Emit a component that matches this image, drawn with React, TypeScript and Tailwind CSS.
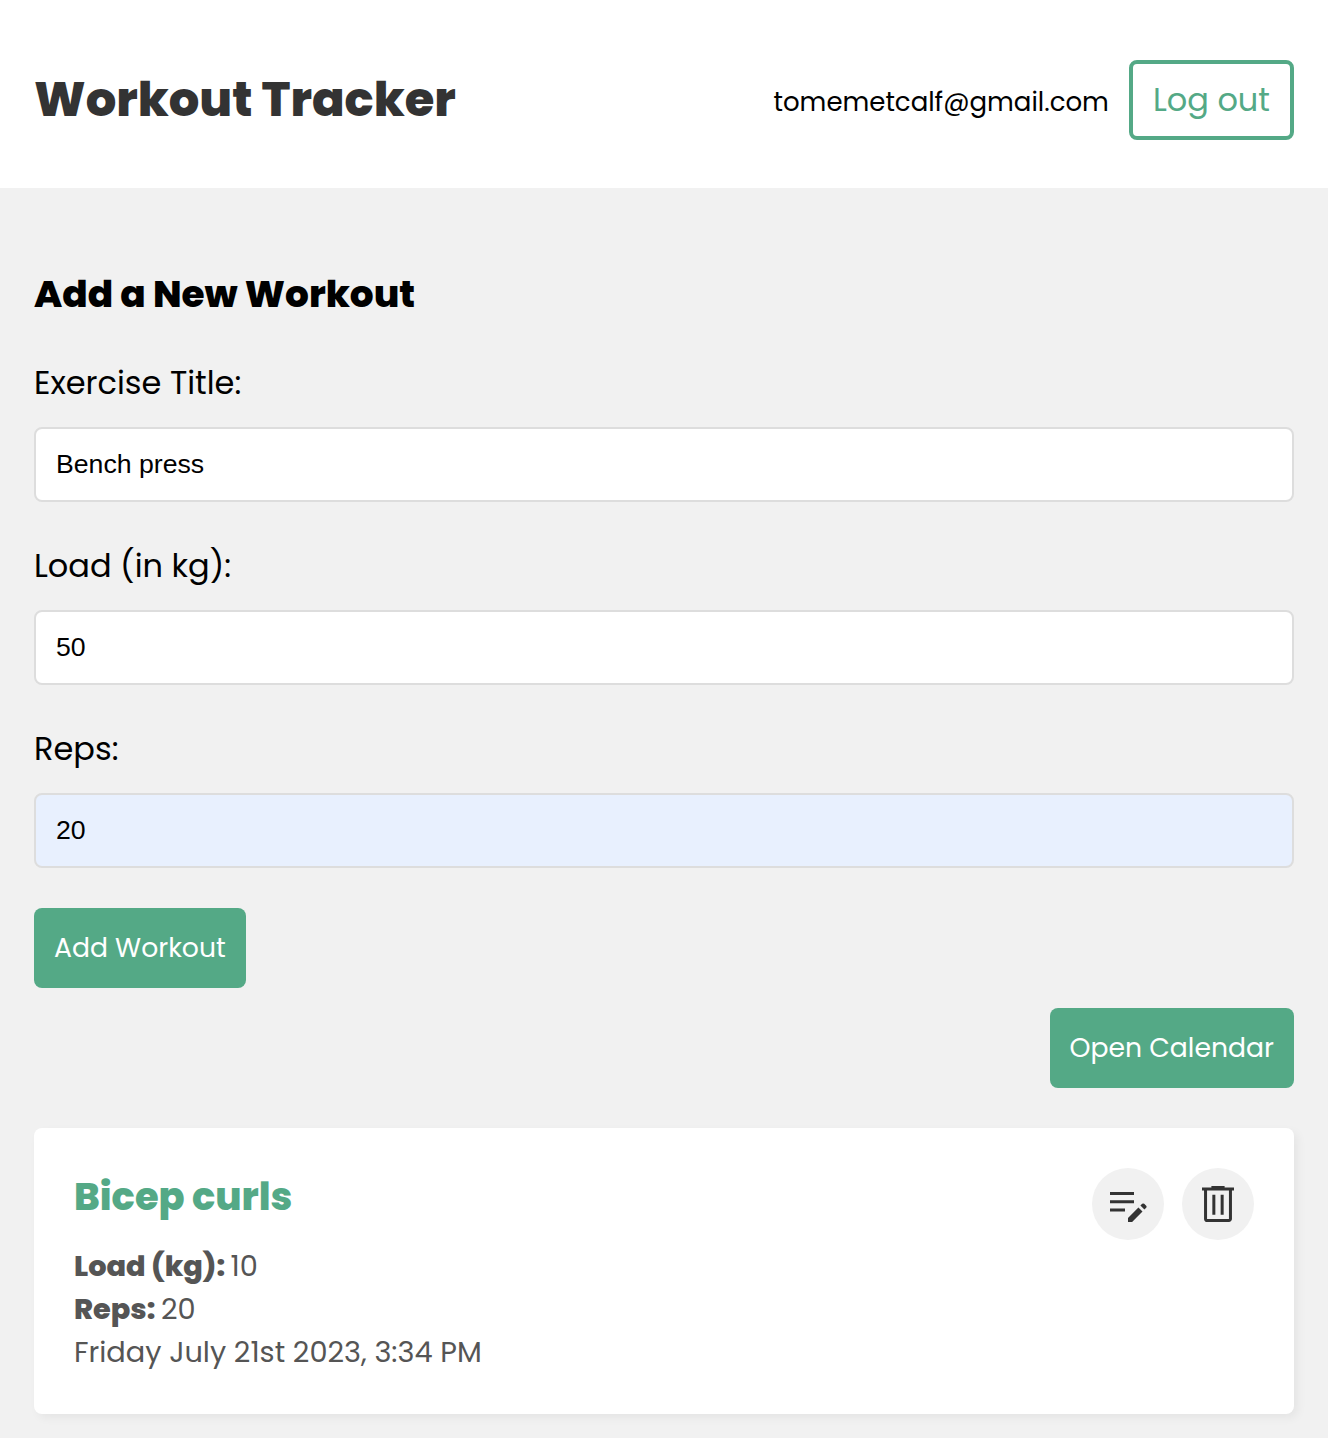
import type { ReactNode } from "react";

const font = "font-[Poppins,Inter,sans-serif]";

function Field({ label, value, filled }: { label: string; value: string; filled?: boolean }) {
  return (
    <div className="mb-10">
      <label className="block text-[32px] leading-[48px]">{label}</label>
      <input
        readOnly
        value={value}
        className={`mt-5 block h-[75px] w-full rounded-lg border-2 border-[#ddd] px-5 font-['Liberation_Sans',Arial,sans-serif] text-[26.667px] text-black outline-none ${filled ? "bg-[#e8f0fe]" : "bg-white"}`}
      />
    </div>
  );
}

function SolidButton({ children }: { children: ReactNode }) {
  return (
    <button className="h-20 rounded-lg bg-[#54a986] px-5 text-[26.667px] leading-10 whitespace-nowrap text-white">
      {children}
    </button>
  );
}

function EditIcon() {
  return (
    <svg width="48" height="48" viewBox="0 0 48 48" fill="#333">
      <path d="M6 31.5v-3h15v3Zm0-8.25v-3h24v3ZM6 15v-3h24v3Zm18 27v-4.1L34.4 27.5l4.1 4.1L28.1 42Zm16.4-12.4-4-4 1.8-1.8q.4-.4 1-.4t1 .4l2 2q.4.4.4 1t-.4 1Z" />
    </svg>
  );
}

function TrashIcon() {
  return (
    <svg width="48" height="48" viewBox="0 0 48 48" fill="#333">
      <path d="M13.05 42q-1.25 0-2.125-.875T10.05 39V10.5H8v-3h9.4V6h13.2v1.5H40v3h-2.05V39q0 1.2-.9 2.1-.9.9-2.1.9Zm21.9-31.5h-21.9V39h21.9Zm-16.6 24.2h3V14.75h-3Zm8.3 0h3V14.75h-3Z" />
    </svg>
  );
}

function CircleButton({ label, children }: { label: string; children: ReactNode }) {
  return (
    <button aria-label={label} className="flex size-[72px] items-center justify-center rounded-full bg-[#f1f1f1]">
      {children}
    </button>
  );
}

export default function App() {
  return (
    <div className={`min-h-[1438px] bg-[#f1f1f1] text-black ${font}`}>
      <header className="flex h-[188px] items-center justify-between bg-white px-[34px] pt-3">
        <h1 className="text-[48px] leading-[72px] font-extrabold text-[#333]">Workout Tracker</h1>
        <div className="flex items-center gap-5">
          <span className="pt-1 text-[26px] leading-10">tomemetcalf@gmail.com</span>
          <button className="h-20 rounded-lg border-4 border-[#54a986] bg-white px-5 text-[32px] leading-[48px] whitespace-nowrap text-[#54a986]">
            Log out
          </button>
        </div>
      </header>

      <main className="px-[34px] pt-[78px] pb-6">
        <form>
          <h3 className="mb-[37px] text-[37.44px] leading-[56px] font-extrabold">Add a New Workout</h3>
          <Field label="Exercise Title:" value="Bench press" />
          <Field label="Load (in kg):" value="50" />
          <Field label="Reps:" value="20" filled />
          <SolidButton>Add Workout</SolidButton>
        </form>

        <div className="mt-5 flex justify-end">
          <SolidButton>Open Calendar</SolidButton>
        </div>

        <article className="mt-10 flex h-[286px] justify-between rounded-lg bg-white p-10 shadow-[4px_4px_10px_rgba(0,0,0,0.05)]">
          <div className="text-[28.8px] leading-[43px] text-[#555]">
            <h4 className="mb-5 text-[38.4px] leading-[57px] font-extrabold text-[#54a986]">Bicep curls</h4>
            <p><strong className="font-extrabold">Load (kg): </strong>10</p>
            <p><strong className="font-extrabold">Reps: </strong>20</p>
            <p>Friday July 21st 2023, 3:34 PM</p>
          </div>
          <div className="flex gap-[18px]">
            <CircleButton label="Edit"><EditIcon /></CircleButton>
            <CircleButton label="Delete"><TrashIcon /></CircleButton>
          </div>
        </article>
      </main>
    </div>
  );
}
